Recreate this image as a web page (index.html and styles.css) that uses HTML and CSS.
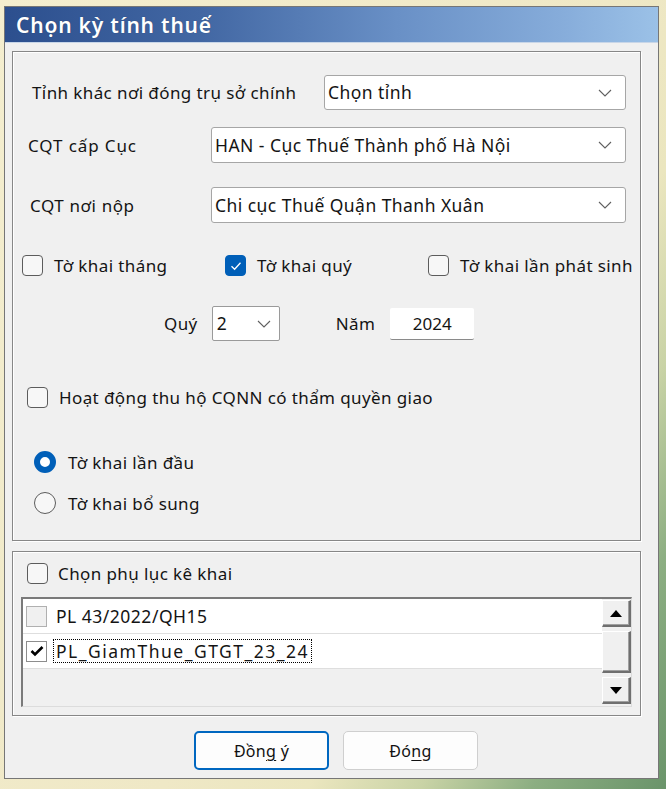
FILE: index.html
```html
<!DOCTYPE html>
<html lang="vi">
<head>
<meta charset="utf-8">
<title>Chọn kỳ tính thuế</title>
<link rel="stylesheet" href="styles.css">
</head>
<body>
<div class="window">
  <div class="titlebar"><span class="title">Chọn kỳ tính thuế</span></div>
  <div class="client">
    <div class="group group-main">
      <div class="row row-tinh">
        <span class="label">Tỉnh khác nơi đóng trụ sở chính</span>
        <div class="combo combo-tinh">
          <span class="combo-text">Chọn tỉnh</span>
          <svg class="chev" width="14" height="8" viewBox="0 0 14 8"><path d="M1 1 L7 7 L13 1" fill="none" stroke="#5f5f5f" stroke-width="1.1"/></svg>
        </div>
      </div>
      <div class="row row-cuc">
        <span class="label">CQT cấp Cục</span>
        <div class="combo combo-wide">
          <span class="combo-text">HAN - Cục Thuế Thành phố Hà Nội</span>
          <svg class="chev" width="14" height="8" viewBox="0 0 14 8"><path d="M1 1 L7 7 L13 1" fill="none" stroke="#5f5f5f" stroke-width="1.1"/></svg>
        </div>
      </div>
      <div class="row row-nop">
        <span class="label">CQT nơi nộp</span>
        <div class="combo combo-wide">
          <span class="combo-text">Chi cục Thuế Quận Thanh Xuân</span>
          <svg class="chev" width="14" height="8" viewBox="0 0 14 8"><path d="M1 1 L7 7 L13 1" fill="none" stroke="#5f5f5f" stroke-width="1.1"/></svg>
        </div>
      </div>

      <div class="check-row">
        <label class="check"><span class="box"></span><span class="ctext">Tờ khai tháng</span></label>
        <label class="check"><span class="box box-on"><svg width="12" height="10" viewBox="0 0 12 10"><path d="M1.5 5.2 L4.6 8.2 L10.5 1.8" fill="none" stroke="#fff" stroke-width="1.3"/></svg></span><span class="ctext">Tờ khai quý</span></label>
        <label class="check"><span class="box"></span><span class="ctext">Tờ khai lần phát sinh</span></label>
      </div>

      <div class="period-row">
        <span class="plabel">Quý</span>
        <div class="combo combo-quy">
          <span class="combo-text">2</span>
          <svg class="chev" width="14" height="8" viewBox="0 0 14 8"><path d="M1 1 L7 7 L13 1" fill="none" stroke="#5f5f5f" stroke-width="1.1"/></svg>
        </div>
        <span class="plabel plabel-nam">Năm</span>
        <div class="textbox">2024</div>
      </div>

      <label class="check check-thuho"><span class="box"></span><span class="ctext">Hoạt động thu hộ CQNN có thẩm quyền giao</span></label>

      <div class="radios">
        <label class="radio"><span class="dot dot-on"></span><span class="ctext">Tờ khai lần đầu</span></label>
        <label class="radio"><span class="dot"></span><span class="ctext">Tờ khai bổ sung</span></label>
      </div>
    </div>

    <div class="group group-pl">
      <label class="check check-pl"><span class="box"></span><span class="ctext">Chọn phụ lục kê khai</span></label>
      <div class="listbox">
        <div class="list-items">
          <div class="item">
            <span class="cbox cbox-off"></span>
            <span class="itext">PL 43/2022/QH15</span>
          </div>
          <div class="item">
            <span class="cbox"><svg width="14" height="12" viewBox="0 0 14 12"><path d="M1.5 6 L5 9.5 L12.5 2" fill="none" stroke="#000" stroke-width="2.6"/></svg></span>
            <span class="itext itext-focus">PL_GiamThue_GTGT_23_24</span>
          </div>
        </div>
        <div class="scrollbar">
          <div class="sbtn"><svg width="12" height="7" viewBox="0 0 12 7"><path d="M6 0 L12 7 L0 7 Z" fill="#000"/></svg></div>
          <div class="sthumb"></div>
          <div class="sbtn"><svg width="12" height="7" viewBox="0 0 12 7"><path d="M0 0 L12 0 L6 7 Z" fill="#000"/></svg></div>
        </div>
      </div>
    </div>

    <div class="buttons">
      <button class="btn btn-default">Đồn<u>g</u> ý</button>
      <button class="btn">Đó<u>n</u>g</button>
    </div>
  </div>
</div>
</body>
</html>
```

FILE: styles.css
```css
* { box-sizing: border-box; }

html, body { margin: 0; padding: 0; }

body {
  width: 666px;
  height: 789px;
  overflow: hidden;
  font-family: "Noto Sans", "Open Sans", sans-serif;
  font-size: 17px;
  line-height: 21px;
  letter-spacing: 0.4px;
  color: #141414;
  background: linear-gradient(120deg, #f4eecf 0%, #efe8c6 55%, #ebe6bf 68%, #c9d3a6 78%, #8cae82 88%, #6a946a 100%);
  padding: 6px 0 0 4px;
}

.window {
  width: 655px;
  height: 773px;
  border: 1px solid #767676;
  background: #f0f0f0;
  display: flex;
  flex-direction: column;
}

.titlebar {
  height: 36px;
  flex: none;
  background: linear-gradient(90deg, #2c4f8e 0%, #4267a3 30%, #6990c6 60%, #86acda 85%, #9bc1e7 100%);
  display: flex;
  align-items: center;
  padding-left: 11px;
  border-bottom: 1px solid #c8d6e8;
}

.title {
  color: #fff;
  font-size: 21px;
  line-height: 26px;
  font-weight: 600;
  letter-spacing: 0.8px;
  text-shadow: 0 0 1px rgba(0,0,0,0.35);
}

.client {
  flex: 1;
  padding: 8px 0 0 7px;
  display: flex;
  flex-direction: column;
}

.group {
  width: 629px;
  border: 1px solid #878787;
  box-shadow: 1px 1px 0 #ffffff, inset 1px 1px 0 #ffffff;
}

.group-main {
  height: 490px;
  padding-top: 23px;
}

.row {
  display: flex;
  align-items: center;
  padding-right: 14px;
}

.label {
  flex: 1;
  white-space: nowrap;
}

.row-tinh .label { padding-left: 19px; }
.row-cuc { margin-top: 17px; }
.row-cuc .label { padding-left: 15px; letter-spacing: 0.9px; }
.row-nop { margin-top: 24px; }
.row-nop .label { padding-left: 17px; letter-spacing: 0.6px; }

.combo {
  background: #fff;
  border: 1px solid #a6a6a6;
  border-radius: 3px;
  display: flex;
  align-items: center;
  justify-content: space-between;
  padding: 0 13px 0 3px;
  white-space: nowrap;
  flex: none;
}

.combo-text { font-size: 17.5px; letter-spacing: 0.45px; }

.combo-tinh { width: 302px; height: 35px; }
.combo-wide { width: 415px; height: 36px; }

.check-row {
  display: grid;
  grid-template-columns: 203px 203px auto;
  margin-top: 32px;
  padding-left: 9px;
}

.check {
  display: flex;
  align-items: center;
  white-space: nowrap;
}

.box {
  width: 21px;
  height: 21px;
  border: 1px solid #5c5c5c;
  border-radius: 4px;
  background: #f7f7f7;
  flex: none;
  display: flex;
  align-items: center;
  justify-content: center;
  margin-right: 11px;
}

.box-on {
  background: #005fb8;
  border-color: #005fb8;
}

.period-row {
  display: flex;
  align-items: center;
  margin-top: 30px;
  padding-left: 151px;
}

.plabel { margin-right: 14px; }
.plabel-nam { margin-left: 56px; margin-right: 15px; }

.combo-quy {
  width: 68px;
  height: 35px;
  border-color: #9a9a9a;
  border-radius: 2px;
  padding: 0 8px 0 4px;
}

.textbox {
  width: 84px;
  height: 32px;
  background: #fff;
  border-bottom: 1px solid #8a8a8a;
  border-radius: 2px;
  display: flex;
  align-items: center;
  justify-content: center;
  font-size: 17px;
  letter-spacing: 0;
}

.check-thuho {
  margin-top: 46px;
  margin-left: 14px;
}

.radios {
  margin-top: 43px;
  margin-left: 21px;
  display: flex;
  flex-direction: column;
  gap: 19px;
}

.radio {
  display: flex;
  align-items: center;
  white-space: nowrap;
}

.dot {
  width: 22px;
  height: 22px;
  border-radius: 50%;
  border: 1px solid #5c5c5c;
  background: #f7f7f7;
  margin-right: 12px;
  flex: none;
}

.dot-on {
  border: 6px solid #005fb8;
  background: #fff;
}

.group-pl {
  margin-top: 10px;
  height: 165px;
  padding: 11px 8px 0 8px;
}

.check-pl { margin-left: 6px; }
.check-pl .box { margin-right: 10px; }

.listbox {
  margin-top: 13px;
  height: 110px;
  border-top: 2px solid #7a7a7a;
  border-left: 2px solid #7a7a7a;
  border-right: 1px solid #dcdcdc;
  border-bottom: 1px solid #dcdcdc;
  background: #f0f0f0;
  display: flex;
}

.list-items {
  flex: 1;
  display: flex;
  flex-direction: column;
}

.item {
  height: 35px;
  background: #fff;
  border-bottom: 1px solid #dedede;
  display: flex;
  align-items: center;
  padding-left: 3px;
}

.cbox {
  width: 21px;
  height: 21px;
  border: 1px solid #8d8d8d;
  background: #fff;
  flex: none;
  display: flex;
  align-items: center;
  justify-content: center;
  margin-right: 7px;
}

.cbox-off {
  background: #f0f0f0;
  border-color: #b0b0b0;
}

.itext {
  font-size: 17.5px;
  letter-spacing: 0.5px;
  padding: 0 2px;
  line-height: 22px;
}

.itext-focus {
  outline: 1px dotted #000;
  letter-spacing: 1.5px;
}

.scrollbar {
  width: 29px;
  flex: none;
  display: flex;
  flex-direction: column;
  justify-content: space-between;
  padding: 1px 0 2px 0;
}

.sbtn, .sthumb {
  background: #f0f0f0;
  border-top: 1px solid #ffffff;
  border-left: 1px solid #ffffff;
  border-right: 2px solid #6f6f6f;
  border-bottom: 2px solid #6f6f6f;
  box-shadow: inset -1px -1px 0 #a0a0a0;
}

.sbtn {
  height: 27px;
  display: flex;
  align-items: center;
  justify-content: center;
}

.sthumb {
  height: 42px;
}

.buttons {
  display: flex;
  justify-content: center;
  gap: 14px;
  margin-top: 15px;
  padding-left: 2px;
}

.btn {
  width: 135px;
  height: 39px;
  border-radius: 5px;
  border: 1px solid #cfcfcf;
  background: #fdfdfd;
  font-family: "Noto Sans", "Open Sans", sans-serif;
  font-size: 16px;
  letter-spacing: 0.3px;
  color: #111;
  padding: 0;
}

.btn u { text-decoration-thickness: 1px; text-underline-offset: 3px; }

.btn-default {
  border: 2px solid #0067c0;
}
```
